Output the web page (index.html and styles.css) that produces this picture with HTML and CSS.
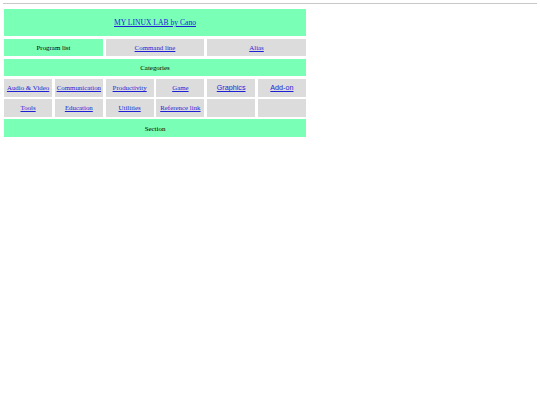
FILE: index.html
```html
<!DOCTYPE html>
<html>
<head>
<meta charset="utf-8">
<link rel="stylesheet" href="styles.css">
</head>
<body>
<hr class="rule">
<div class="board">
  <div class="cell green title span6"><a href="#">MY LINUX LAB by Cano</a></div>
  <div class="cell green span2">Program list</div>
  <div class="cell gray span2"><a href="#">Command line</a></div>
  <div class="cell gray span2"><a href="#">Alias</a></div>
  <div class="cell green span6">Categories</div>
  <div class="cell gray"><a href="#">Audio &amp; Video</a></div>
  <div class="cell gray"><a href="#">Communication</a></div>
  <div class="cell gray"><a href="#">Productivity</a></div>
  <div class="cell gray"><a href="#">Game</a></div>
  <div class="cell gray sans"><a href="#">Graphics</a></div>
  <div class="cell gray sans"><a href="#">Add-on</a></div>
  <div class="cell gray"><a href="#">Tools</a></div>
  <div class="cell gray"><a href="#">Education</a></div>
  <div class="cell gray"><a href="#">Utilities</a></div>
  <div class="cell gray"><a href="#">Reference link</a></div>
  <div class="cell gray"></div>
  <div class="cell gray"></div>
  <div class="cell green span6">Section</div>
</div>
</body>
</html>
```
FILE: styles.css
```css
html, body {
  margin: 0;
  background: #ffffff;
}
body {
  padding: 3px 3px 0 3px;
  font-family: "Liberation Serif", "Times New Roman", serif;
  font-size: 6.9px;
  color: #000;
}
.rule {
  margin: 0 0 5px 0;
  height: 0;
  border: 0;
  border-top: 1px solid #c8c8c8;
}
.board {
  margin-left: 1px;
  width: 302px;
  display: grid;
  grid-template-columns: repeat(6, 1fr);
  grid-template-rows: 27px repeat(5, 17.6px);
  column-gap: 2.6px;
  row-gap: 2.6px;
}
.cell {
  display: flex;
  align-items: center;
  justify-content: center;
  white-space: nowrap;
}
.green { background: #79ffb6; }
.gray { background: #dcdcdc; }
.span2 { grid-column: span 2; }
.span6 { grid-column: span 6; }
.title { font-size: 7.6px; }
.sans { font-family: "Liberation Sans", Arial, sans-serif; font-size: 7.2px; }
a { color: #1f1fd6; }
```
